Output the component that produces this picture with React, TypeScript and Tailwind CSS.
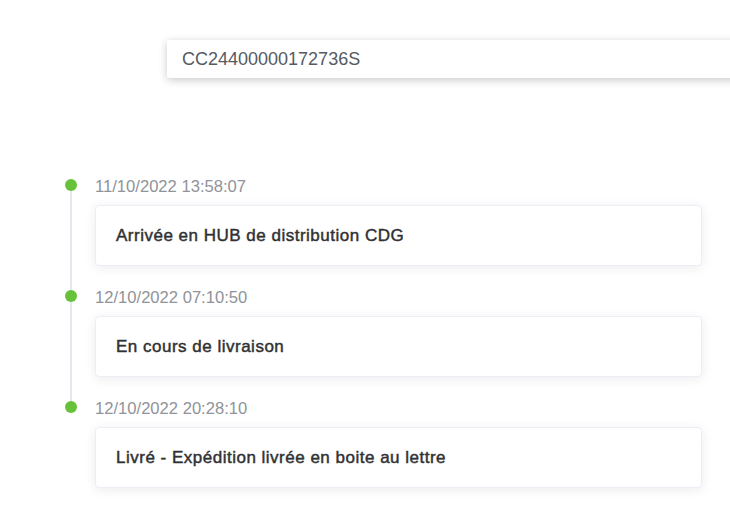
import React from "react";

const items = [
  { t: "11/10/2022 13:58:07", c: "Arrivée en HUB de distribution CDG" },
  { t: "12/10/2022 07:10:50", c: "En cours de livraison" },
  { t: "12/10/2022 20:28:10", c: "Livré - Expédition livrée en boite au lettre" },
];

export default function App() {
  return (
    <div
      className="w-[730px] h-[516px] bg-white overflow-hidden"
      style={{ fontFamily: '"Liberation Sans", Arial, sans-serif' }}
    >
      <div className="pt-[40px] pl-[167px]">
        <div className="h-[38px] w-[600px] bg-white flex items-center pl-[15px] shadow-[0_2px_8px_rgba(0,0,0,0.22)] rounded-[2px]">
          <span className="text-[18px] text-[#555b63]">CC24400000172736S</span>
        </div>
      </div>
      <div className="pt-[100px] pl-[65px] pr-[28px]">
        {items.map((it, i) => (
          <div key={i} className="relative flex pb-[23px]">
            {i < items.length - 1 && (
              <div className="absolute left-[5px] top-[6px] bottom-[-6px] w-[2px] bg-[#e4e7ed]" />
            )}
            <div className="relative w-[12px] h-[12px] rounded-full bg-[#67c23a] mt-[1px] shrink-0" />
            <div className="flex-1 pl-[18px]">
              <div className="text-[16.6px] leading-[18px] text-[#909399] mb-[9px]">{it.t}</div>
              <div className="border border-[#ebeef5] rounded-[4px] bg-white shadow-[0_2px_12px_rgba(0,0,0,0.08)] h-[61px] flex items-center px-[20px]">
                <span className="text-[17px] text-[#303133] tracking-[0.5px] [-webkit-text-stroke:0.45px_#303133]">{it.c}</span>
              </div>
            </div>
          </div>
        ))}
      </div>
    </div>
  );
}
